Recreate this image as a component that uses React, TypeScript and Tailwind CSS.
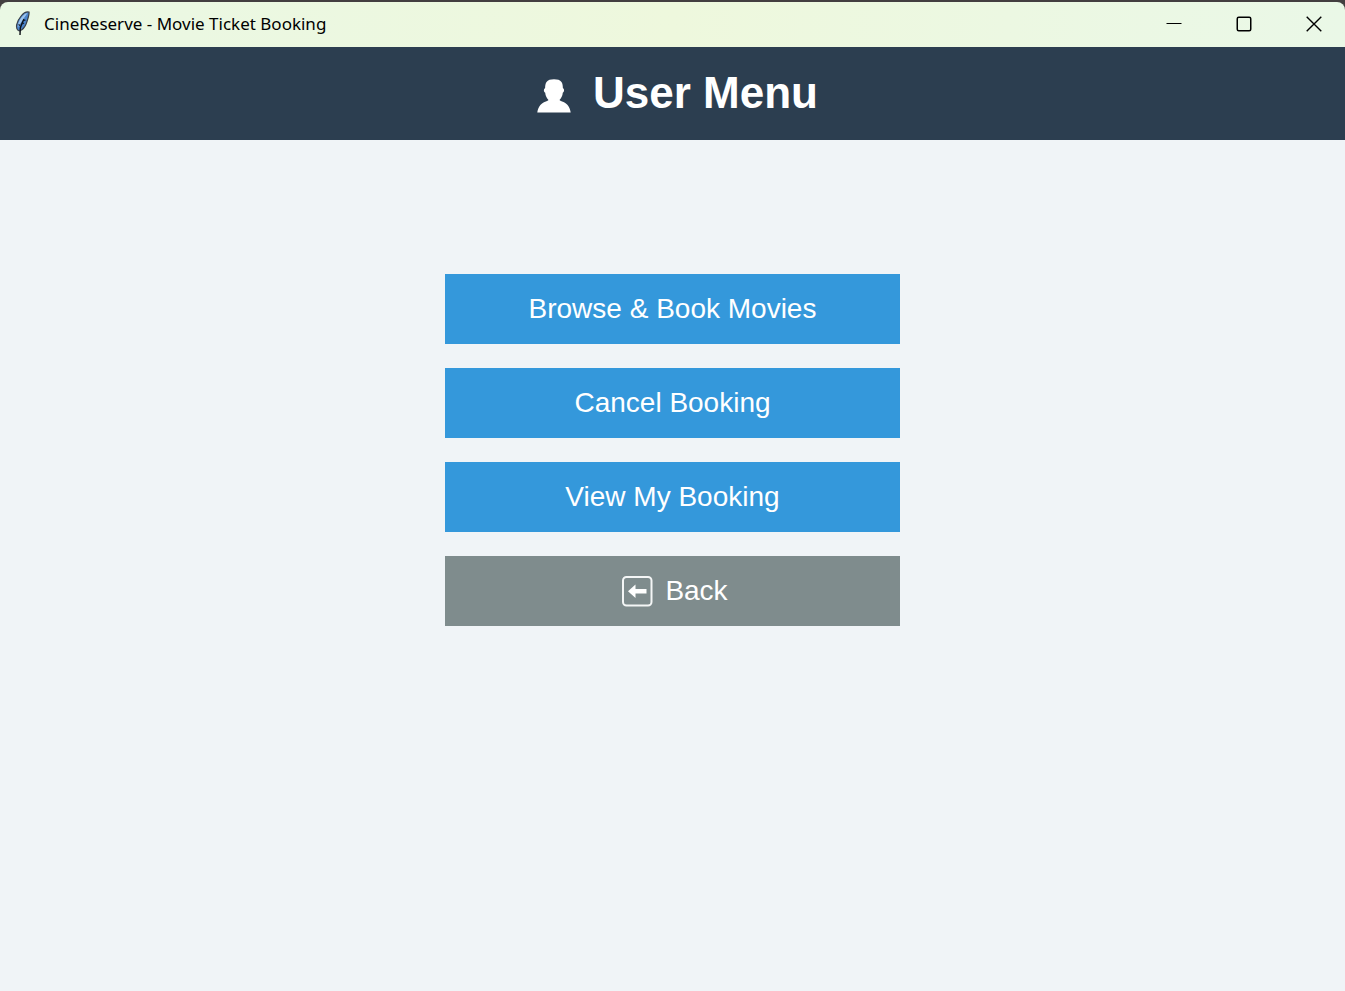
import React from "react";

function FeatherLogo() {
  return (
    <svg viewBox="0 0 16 25" className="h-[25px] w-4 shrink-0" aria-hidden="true">
      <path d="M14 1C11.500 0.500 8.500 2 6.500 4.500C4 7.500 2.300 10.500 1.700 13.500C1.200 16.500 1.800 18.500 3.300 19.500L4.800 19.800C8 18.500 10 16 11.300 12.500C12.500 9 14.500 4 14 1Z" fill="#4a84cc" stroke="#3a4048" strokeWidth="1.200" />
      <path d="M12.500 2C9.500 2.500 6.500 5.500 4.500 9.500C3.300 12 2.600 14.500 2.800 16.500L5 13L9 7Z" fill="#9dc3ec" />
      <path d="M9 8C7 12 6 14.500 5.300 17L5 24" fill="none" stroke="#0c1016" strokeWidth="1.400" />
      <path d="M9 9.500L10.500 9M7 13L9 12M3.500 13.500L5 14.500" stroke="#101a2c" strokeWidth="1.200" />
    </svg>
  );
}

function PersonIcon() {
  return (
    <svg viewBox="0 0 34 34" className="mt-1.5 h-[34px] w-[34px] shrink-0" fill="#ffffff" aria-hidden="true">
      <path d="M17 0.300C20.500 0.300 23 0.900 24.500 3C25.600 4.600 25.800 6.500 25.900 9.300C27.500 9.800 27.500 13 25.800 13.800C25.500 16.800 24.300 19.200 22.500 21C23 21.800 24.500 22.200 26.500 22.900C30.500 24.600 33 28.500 33.700 33.500H0.300C1 28.500 3.500 24.600 7.500 22.900C9.500 22.200 11 21.800 11.500 21C9.700 19.200 8.500 16.800 8.200 13.800C6.500 13 6.500 9.800 8.100 9.300C8.200 6.500 8.400 4.600 9.500 3C11 0.900 13.500 0.300 17 0.300Z" />
    </svg>
  );
}

function BackIcon() {
  return (
    <svg viewBox="0 0 32 32" className="size-8 shrink-0" aria-hidden="true">
      <rect x="2" y="2" width="28.500" height="28.500" rx="3.500" fill="none" stroke="#f4f6f6" strokeWidth="2" />
      <path d="M7 16.300L14.500 9.500V14H25.500V18.500H14.500V23Z" fill="#ffffff" />
    </svg>
  );
}

function TitleBar() {
  const control = "flex h-full w-[70px] items-center justify-center";
  return (
    <div className="overflow-hidden bg-[#433f40] pt-0.5">
      <div className="flex h-[45px] items-center rounded-t-lg bg-linear-to-r from-[#eaf8e4] via-[#eef8dd] to-[#eaf8e7] pb-0.5 pl-[15px]">
        <FeatherLogo />
        <span className="ml-[13px] font-['Noto_Sans','Open_Sans',sans-serif] text-[17px] leading-6 text-black">
          CineReserve - Movie Ticket Booking
        </span>
        <div className="-mr-1 ml-auto flex h-full">
          <button type="button" aria-label="Minimize" className={control}>
            <svg viewBox="0 0 16 16" className="size-4" stroke="#000" aria-hidden="true">
              <path d="M0.500 7.500H15.500" />
            </svg>
          </button>
          <button type="button" aria-label="Maximize" className={control}>
            <svg viewBox="0 0 16 16" className="size-4" fill="none" stroke="#000" strokeWidth="1.500" aria-hidden="true">
              <rect x="1.250" y="1.250" width="13.500" height="13.500" rx="1.500" />
            </svg>
          </button>
          <button type="button" aria-label="Close" className={control}>
            <svg viewBox="0 0 16 16" className="size-4" stroke="#000" strokeWidth="1.400" aria-hidden="true">
              <path d="M0.700 0.700L15.300 15.300M15.300 0.700L0.700 15.300" />
            </svg>
          </button>
        </div>
      </div>
    </div>
  );
}

function MenuButton({ children, muted = false }: { children: React.ReactNode; muted?: boolean }) {
  return (
    <button
      type="button"
      className={`flex h-[70px] w-full items-center justify-center gap-3 text-[28px] leading-8 text-white ${
        muted ? "bg-[#7f8c8d] pl-1" : "bg-[#3498db]"
      }`}
    >
      {children}
    </button>
  );
}

export default function App() {
  return (
    <div className="flex min-h-screen flex-col bg-[#f0f4f7] font-['Liberation_Sans',Arial,sans-serif]">
      <TitleBar />
      <header className="flex h-[93px] items-center justify-center gap-[22px] bg-[#2c3e50] pb-0.5 pl-[10px] text-white">
        <PersonIcon />
        <h1 className="text-[44px] leading-[52px] font-bold">User Menu</h1>
      </header>
      <main className="flex flex-1 flex-col items-center px-4 pt-[134px]">
        <nav aria-label="User menu" className="flex w-full max-w-[455px] flex-col gap-6">
          <MenuButton>Browse &amp; Book Movies</MenuButton>
          <MenuButton>Cancel Booking</MenuButton>
          <MenuButton>View My Booking</MenuButton>
          <MenuButton muted>
            <BackIcon />
            Back
          </MenuButton>
        </nav>
      </main>
    </div>
  );
}
